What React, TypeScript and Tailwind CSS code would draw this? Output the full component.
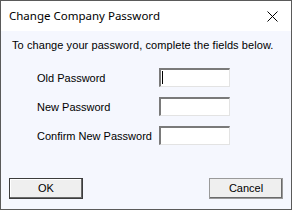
export default function App() {
    return (
        <div className="w-[292px] h-[210px] flex flex-col border border-[#5a5a5a] bg-white overflow-hidden">
            {/* title bar */}
            <div className="h-[30px] flex items-center justify-between bg-white pl-[8px] pr-[12px]">
                <p className="font-['Noto_Sans',sans-serif] text-[11.5px] text-black leading-none">Change Company Password</p>
                <svg width="11" height="11" viewBox="0 0 11 11" className="mr-[1px]">
                    <path d="M0.5 0.5 L10.5 10.5 M10.5 0.5 L0.5 10.5" stroke="#000" strokeWidth="1" fill="none" />
                </svg>
            </div>

            {/* client */}
            <div className="flex-1 flex flex-col bg-[#f5f7fe] font-['Liberation_Sans',Arial,sans-serif] text-[11px] text-black">
                <p className="mt-[8px] ml-[11px] leading-[13px] tracking-[0.08px]">To change your password, complete the fields below.</p>

                <div className="mt-[16px] ml-[36px] flex flex-col gap-[10px]">
                    <div className="flex items-center h-[19px]">
                        <p className="w-[122px] leading-[13px] pt-[1px]">Old Password</p>
                        <div className="relative w-[71px] h-[19px] bg-white border-t-2 border-l-2 border-t-[#7a7a7a] border-l-[#7a7a7a] border-r border-b border-r-[#e3e3e3] border-b-[#e3e3e3]">
                            <div className="absolute left-[1px] top-[1px] w-[1px] h-[13px] bg-black" />
                        </div>
                    </div>
                    <div className="flex items-center h-[19px]">
                        <p className="w-[122px] leading-[13px] pt-[1px]">New Password</p>
                        <div className="w-[71px] h-[19px] bg-white border-t-2 border-l-2 border-t-[#7a7a7a] border-l-[#7a7a7a] border-r border-b border-r-[#e3e3e3] border-b-[#e3e3e3]" />
                    </div>
                    <div className="flex items-center h-[19px]">
                        <p className="w-[122px] leading-[13px] pt-[1px]">Confirm New Password</p>
                        <div className="w-[71px] h-[19px] bg-white border-t-2 border-l-2 border-t-[#7a7a7a] border-l-[#7a7a7a] border-r border-b border-r-[#e3e3e3] border-b-[#e3e3e3]" />
                    </div>
                </div>

                <div className="mt-auto mb-[10px] px-[8px] flex justify-between">
                    <button className="w-[74px] h-[21px] bg-[#efefef] border border-[#3c3c3c] shadow-[inset_-1px_-1px_0_#6a6a6a,inset_1px_1px_0_#ffffff] text-[11px] leading-none">OK</button>
                    <button className="w-[74px] h-[21px] bg-[#efefef] border border-[#9a9a9a] shadow-[inset_-1px_-1px_0_#6a6a6a] text-[11px] leading-none">Cancel</button>
                </div>
            </div>
        </div>
    );
}
